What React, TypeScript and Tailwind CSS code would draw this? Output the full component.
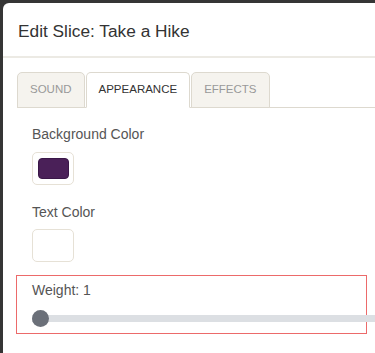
import { useState } from "react";

const tabs = ["Sound", "Appearance", "Effects"];

function Swatch({ color }: { color?: string }) {
  return (
    <div className="w-[42px] h-[33px] rounded-[5px] border border-[#e6e1d6] bg-white flex items-center justify-center">
      {color && (
        <div
          className="w-[31px] h-[21px] rounded-[4px] border border-[#3a1748]"
          style={{ backgroundColor: color }}
        />
      )}
    </div>
  );
}

export default function App() {
  const [activeTab, setActiveTab] = useState("Appearance");
  const [weight] = useState(1);

  return (
    <div
      className="w-[375px] h-[353px] overflow-hidden bg-[#353535] pt-[3px] pl-[3px]"
      style={{ fontFamily: '"Liberation Sans", Arial, sans-serif' }}
    >
      <div className="h-[400px] w-[420px] bg-white rounded-tl-[6px]">
        {/* Header */}
        <div className="h-[55px] border-b-2 border-[#eceae4] pl-[15px] pt-[18px]">
          <h1 className="text-[17.3px] leading-[20px] text-[#333]">
            Edit Slice: Take a Hike
          </h1>
        </div>

        {/* Tabs */}
        <div className="pt-[14px] pl-[14px]">
          <div className="flex items-end border-b border-[#ddd9cf] h-[36px]">
            {tabs.map((tab) => {
              const active = tab === activeTab;
              return (
                <button
                  key={tab}
                  onClick={() => setActiveTab(tab)}
                  className={`h-[36px] -mb-px mr-px px-[12px] rounded-t-[5px] border border-[#ddd9cf] text-[11.5px] uppercase ${
                    active
                      ? "bg-white border-b-white text-[#333]"
                      : "bg-[#f5f3ee] text-[#999]"
                  }`}
                >
                  {tab}
                </button>
              );
            })}
          </div>
        </div>

        {/* Content */}
        <div className="pt-[16px] pl-[29px]">
          <div className="text-[14px] leading-[20px] text-[#555]">
            Background Color
          </div>
          <div className="mt-[8px]">
            <Swatch color="#4a2058" />
          </div>
          <div className="mt-[17px] text-[14px] leading-[20px] text-[#555]">
            Text Color
          </div>
          <div className="mt-[7px]">
            <Swatch />
          </div>
        </div>

        <div className="mt-[13px] ml-[13px] w-[351px] h-[59px] border border-[#ec6a6a] pl-[15px] pt-[4px]">
          <div className="text-[14px] leading-[20px] text-[#555]">
            Weight: {weight}
          </div>
          <div className="relative mt-[15px] w-[400px] h-[7px] bg-[#dcdfe3]">
            <div className="absolute left-0 top-[-5px] w-[17px] h-[17px] rounded-full bg-[#6b7079]" />
          </div>
        </div>
      </div>
    </div>
  );
}
